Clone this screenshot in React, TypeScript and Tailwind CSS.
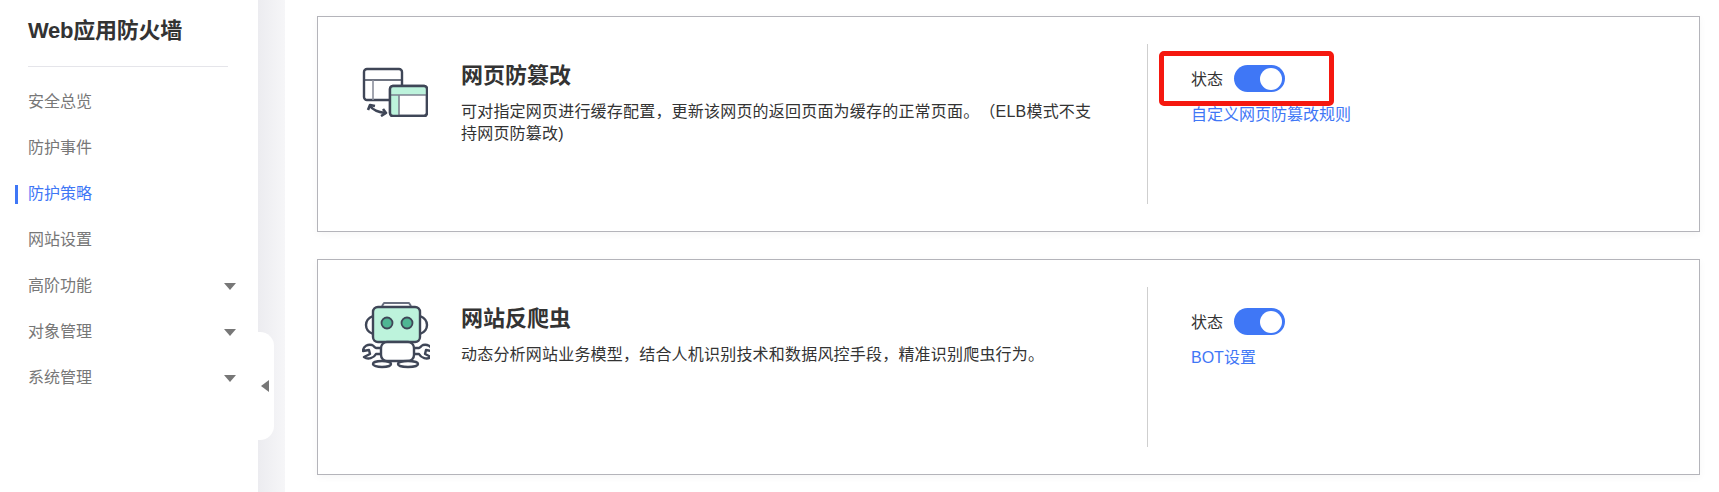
import { ReactNode } from "react";

const NAV_ITEMS = [
  { label: "安全总览" },
  { label: "防护事件" },
  { label: "防护策略", active: true },
  { label: "网站设置" },
  { label: "高阶功能", caret: true },
  { label: "对象管理", caret: true },
  { label: "系统管理", caret: true },
];

const CJK = "font-['Liberation_Sans','Noto_Sans_CJK_SC',sans-serif]";

function CacheIcon() {
  return (
    <svg width="66" height="50" viewBox="0 0 66 50" fill="none" stroke="#3f4657" strokeWidth="2.4" strokeLinejoin="round">
      <rect x="2" y="2" width="38" height="31" rx="3" fill="#fff" />
      <path d="M2 13h38" strokeWidth="1.6" />
      <path d="M11 13v20" stroke="#8b8f9c" strokeWidth="1.6" />
      <rect x="28" y="19" width="37" height="30" rx="3" fill="#fff" />
      <path d="M29 20h35v8H37v20h-8z" fill="#bdf3dc" stroke="none" />
      <path d="M28 28h37" stroke="#7d8290" strokeWidth="1.6" />
      <path d="M37 28v20" stroke="#7d8290" strokeWidth="1.6" />
      <rect x="28" y="19" width="37" height="30" rx="3" />
      <path d="M8 39c3 4 8 6 15 7" strokeWidth="2.6" />
      <path d="M6 43l2-5 5 1M19 49l5-3-3-4" strokeWidth="2.6" />
    </svg>
  );
}

function RobotIcon() {
  return (
    <svg width="68" height="68" viewBox="0 0 68 68" fill="none" stroke="#3f4657" strokeWidth="2.4" strokeLinejoin="round">
      <path d="M20 5l2-3h25l2 3" strokeWidth="2" stroke="#6a7080" />
      <path d="M11 15c-5 2-7 5-7 9s2 7 7 9M58 15c5 2 7 5 7 9s-2 7-7 9" />
      <rect x="11" y="6" width="47" height="35" rx="5" fill="#bdf3dc" />
      <circle cx="25" cy="22" r="5.5" fill="#4fb593" strokeWidth="1.8" />
      <circle cx="45" cy="22" r="5.5" fill="#4fb593" strokeWidth="1.8" />
      <path d="M19 53h-5c-2 4-8 6-12 3l6-3-1-4-6 1c0-5 5-7 9-6 2 1 3 3 4 3h5" fill="#fff" />
      <path d="M52 53h5c2 4 8 6 12 3l-6-3 1-4 6 1c0-5-5-7-9-6-2 1-3 3-4 3h-5" fill="#fff" />
      <rect x="19" y="41" width="33" height="19" rx="6" fill="#fff" />
      <ellipse cx="20" cy="63" rx="9" ry="3" fill="#fff" />
      <ellipse cx="46" cy="63" rx="10" ry="3" fill="#fff" />
    </svg>
  );
}

function Toggle() {
  return (
    <span className="flex h-[27px] w-[51px] items-center justify-end rounded-full bg-[#3f77f6] pr-[3px]">
      <span className="size-[22px] rounded-full bg-white" />
    </span>
  );
}

function FeatureCard({
  icon,
  title,
  children,
  link,
  highlight,
}: {
  icon: ReactNode;
  title: string;
  children: ReactNode;
  link: string;
  highlight?: boolean;
}) {
  return (
    <section className="flex h-[216px] border border-[#b4b4ba] bg-white shadow-[0_2px_8px_rgba(0,0,0,0.04)]">
      <div className="w-[143px] shrink-0 pl-[44px] pt-[41px]">
        <div className="flex h-[68px] items-center">{icon}</div>
      </div>
      <div className="w-[640px] shrink-0 pt-[46px]">
        <h2 className="text-[22px] leading-[26px] font-bold text-[#333]">{title}</h2>
        <p className="mt-[12px] text-[16px] leading-[22px] tracking-[0.2px] text-[#333] [text-spacing-trim:space-all]">{children}</p>
      </div>
      <div className="my-[27px] ml-[46px] border-l border-[#cfcfcf] pl-[43px] pt-[21px]">
        <div className="relative flex items-center gap-[11px] text-[16px] text-[#333]">
          <span className="pt-[2px]">状态</span>
          <Toggle />
          {highlight && (
            <span className="absolute -top-[14px] -left-[32px] h-[55px] w-[175px] rounded-[5px] border-[5px] border-[#f5180f]" />
          )}
        </div>
        <a className="mt-[12px] block text-[16px] leading-[22px] text-[#3f77f6]">{link}</a>
      </div>
    </section>
  );
}

export default function App() {
  return (
    <div className={`flex h-[492px] w-[1719px] overflow-hidden bg-white ${CJK}`}>
      <aside className="w-[258px] shrink-0">
        <h1 className="pl-[28px] pt-[15px] text-[22px] leading-[32px] font-bold tracking-[-0.25px] text-[#333]">Web应用防火墙</h1>
        <div className="ml-[28px] mt-[19px] h-px w-[200px] bg-[#e5e5ea]" />
        <nav className="mt-[12px]">
          {NAV_ITEMS.map((item) => (
            <div
              key={item.label}
              className={`flex h-[46px] items-center pl-[28px] text-[16px] ${item.active ? "text-[#3f77f6]" : "text-[#777]"}`}
            >
              <span className={`-ml-[13px] mr-[10px] h-[19px] w-[3px] ${item.active ? "bg-[#3f77f6]" : "bg-transparent"}`} />
              <span>{item.label}</span>
              {item.caret && <span className="ml-auto mr-[22px] size-0 border-x-[6px] border-t-[7px] border-x-transparent border-t-[#777]" />}
            </div>
          ))}
        </nav>
      </aside>
      <div className="relative w-[27px] shrink-0 bg-gradient-to-r from-[#ececf0] to-[#f6f6f8]">
        <div className="absolute left-0 top-[332px] flex h-[108px] w-[16px] items-center justify-end rounded-r-[14px] bg-white pr-[5px]">
          <span className="size-0 border-y-[6px] border-r-[8px] border-y-transparent border-r-[#777]" />
        </div>
      </div>
      <main className="flex w-[1434px] flex-col gap-[27px] pl-[32px] pr-[19px] pt-[16px]">
        <FeatureCard icon={<CacheIcon />} title="网页防篡改" link="自定义网页防篡改规则" highlight>
          可对指定网页进行缓存配置，更新该网页的返回页面为缓存的正常页面。（ELB模式不支持网页防篡改)
        </FeatureCard>
        <FeatureCard icon={<RobotIcon />} title="网站反爬虫" link="BOT设置">
          动态分析网站业务模型，结合人机识别技术和数据风控手段，精准识别爬虫行为。
        </FeatureCard>
      </main>
    </div>
  );
}
